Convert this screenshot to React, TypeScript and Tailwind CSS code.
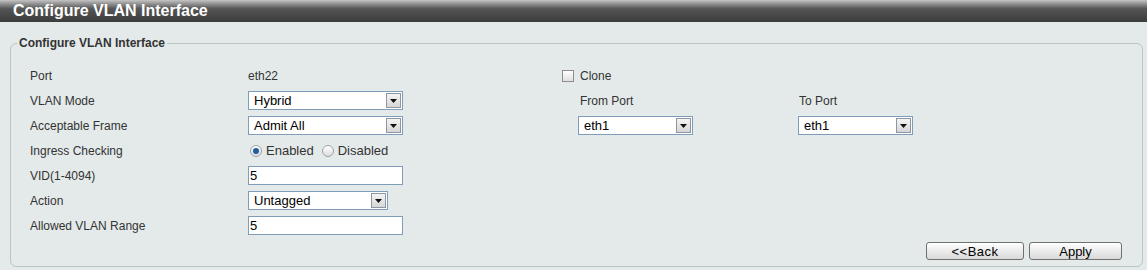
import React from "react";

const font = { fontFamily: '"Liberation Sans", Arial, sans-serif' };

function Select({ value, width }: { value: string; width: string }) {
  return (
    <div className={`flex h-[19px] items-center border border-[#7f9db9] bg-white ${width}`}>
      <span className="flex-1 pl-[5px] text-[13px] leading-none text-black">{value}</span>
      <span className="mr-px flex h-[15px] w-[15px] items-center justify-center border border-[#8c97a3] bg-gradient-to-b from-[#f4f4f4] to-[#d6d6d6]">
        <svg width="7" height="4" viewBox="0 0 7 4">
          <path d="M0 0h7L3.5 4z" fill="#111" />
        </svg>
      </span>
    </div>
  );
}

function TextInput({ value }: { value: string }) {
  return (
    <div className="flex h-[19px] w-[155px] items-center border border-[#7f9db9] bg-white pl-px text-[13px] text-black">
      {value}
    </div>
  );
}

function Radio({ checked, label }: { checked?: boolean; label: string }) {
  return (
    <span className="flex items-center gap-[4px]">
      <span className="flex h-[12px] w-[12px] items-center justify-center rounded-full border border-[#9aa3ab] bg-gradient-to-b from-white to-[#dcdcdc]">
        {checked && <span className="h-[6px] w-[6px] rounded-full bg-[#1e5e9e]" />}
      </span>
      <span>{label}</span>
    </span>
  );
}

function Row({ label, children, extra }: { label: string; children?: React.ReactNode; extra?: React.ReactNode }) {
  return (
    <div className="flex h-[25px] items-center">
      <div className="w-[218px]">{label}</div>
      <div className="w-[314px]">{children}</div>
      {extra}
    </div>
  );
}

export default function App() {
  return (
    <div style={font} className="h-[270px] w-[1147px] overflow-hidden bg-[#e4eaea] text-[12px] text-[#333]">
      <div className="flex h-[22px] items-center bg-gradient-to-b from-[#c4c4c4] via-[#555555] via-40% to-[#3c3c3c] pl-[13px] text-[16px] font-bold text-white">
        Configure VLAN Interface
      </div>
      <fieldset className="mt-[14px] ml-[10px] mr-[4px] rounded-[6px] border border-[#bcc4c4] p-0">
        <legend className="ml-[6px] px-[2px] text-[12px] font-bold leading-[14px] text-[#333]">
          Configure VLAN Interface
        </legend>
        <div className="pl-[19px] pr-[20px] pt-[13px] pb-[6px]">
          <Row
            label="Port"
            extra={
              <div className="flex items-center gap-[6px]">
                <span className="h-[12px] w-[12px] border border-[#8f8f8f] bg-gradient-to-b from-white to-[#e0e0e0]" />
                <span>Clone</span>
              </div>
            }
          >
            eth22
          </Row>
          <Row
            label="VLAN Mode"
            extra={
              <>
                <div className="w-[236px] pl-[18px]">From Port</div>
                <div className="pl-px">To Port</div>
              </>
            }
          >
            <Select value="Hybrid" width="w-[155px]" />
          </Row>
          <Row
            label="Acceptable Frame"
            extra={
              <>
                <div className="w-[236px] pl-[16px]">
                  <Select value="eth1" width="w-[115px]" />
                </div>
                <Select value="eth1" width="w-[115px]" />
              </>
            }
          >
            <Select value="Admit All" width="w-[155px]" />
          </Row>
          <Row label="Ingress Checking">
            <div className="flex items-center gap-[8px] pl-[2px] text-[13px]">
              <Radio checked label="Enabled" />
              <Radio label="Disabled" />
            </div>
          </Row>
          <Row label="VID(1-4094)">
            <TextInput value="5" />
          </Row>
          <Row label="Action">
            <Select value="Untagged" width="w-[140px]" />
          </Row>
          <Row label="Allowed VLAN Range">
            <TextInput value="5" />
          </Row>
          <div className="mt-[4px] flex justify-end gap-[5px]">
            <button className="h-[18px] w-[98px] rounded-[3px] border border-[#707070] bg-gradient-to-b from-white to-[#d9d9d9] text-[13px] leading-none tracking-[0.5px] text-black">
              &lt;&lt;Back
            </button>
            <button className="h-[18px] w-[93px] rounded-[3px] border border-[#707070] bg-gradient-to-b from-white to-[#d9d9d9] text-[13px] leading-none text-black">
              Apply
            </button>
          </div>
        </div>
      </fieldset>
    </div>
  );
}
